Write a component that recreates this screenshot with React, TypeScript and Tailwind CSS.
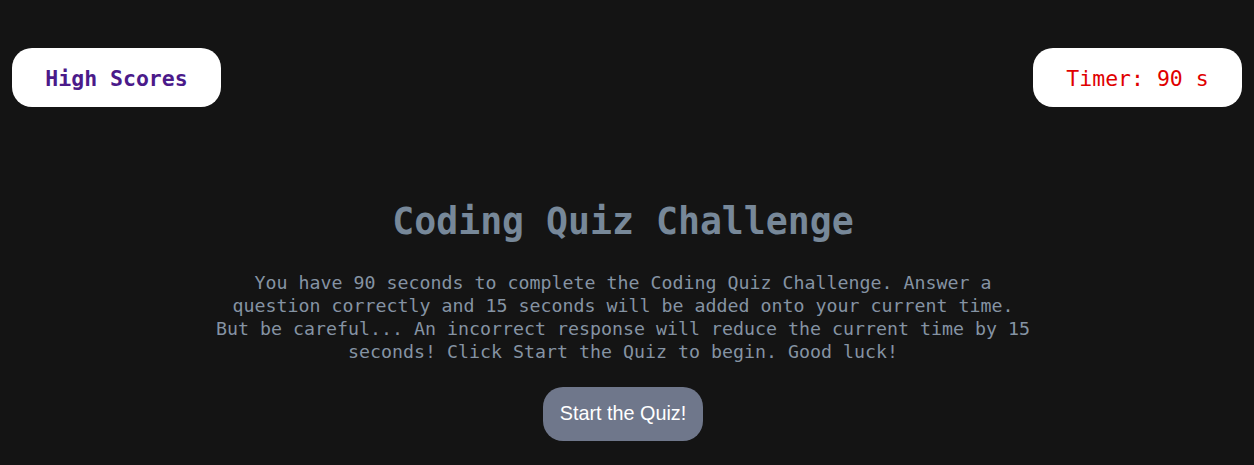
export default function App() {
  return (
    <main className="min-h-[465px] bg-[#141414] font-['DejaVu_Sans_Mono',monospace]">
      <header className="flex items-center justify-between px-3 pt-12">
        <button className="h-[59px] w-[209px] rounded-[20px] bg-white pt-[3px] text-[21.5px] font-bold text-[#4b1a8a]">
          High Scores
        </button>
        <div className="flex h-[59px] w-[209px] items-center justify-center rounded-[20px] bg-white pt-[3px] text-[21.5px] text-[#e00000]">
          Timer: 90 s
        </div>
      </header>

      <section className="mt-[93px] flex flex-col items-center pr-2">
        <h1 className="text-[36.5px] leading-[44px] font-bold text-[#778899]">
          Coding Quiz Challenge
        </h1>
        <p className="mt-[27px] w-[820px] text-center text-[18.27px] leading-[23px] text-[#8593a3]">
          You have 90 seconds to complete the Coding Quiz Challenge. Answer a question correctly and
          15 seconds will be added onto your current time. But be careful... An incorrect response
          will reduce the current time by 15 seconds! Click Start the Quiz to begin. Good luck!
        </p>
        <button className="mt-[24px] h-[54px] w-[160px] rounded-[20px] bg-[#6f778b] font-['Liberation_Sans',Arial,sans-serif] text-[19.8px] text-white">
          Start the Quiz!
        </button>
      </section>
    </main>
  );
}
